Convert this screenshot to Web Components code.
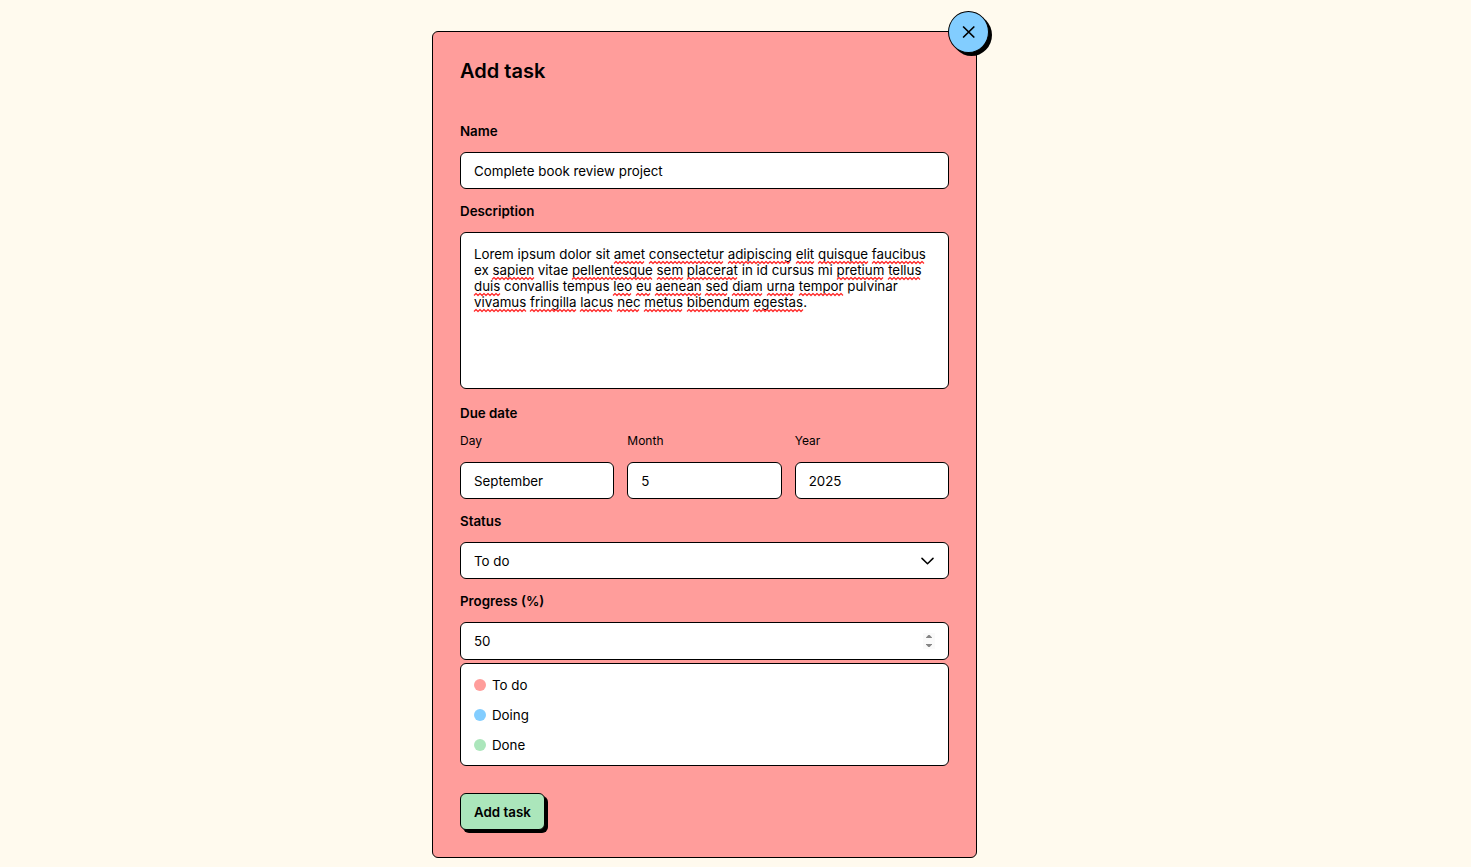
<!DOCTYPE html>
<html lang="en">
<head>
<meta charset="utf-8">
<meta name="viewport" content="width=device-width, initial-scale=1">
<title>Add task</title>
<style>
  :root {
    --cream: #fffaee;
    --coral: #ff9d9b;
    --sky: #82cdff;
    --mint: #abe6bb;
    --ink: #000;
    --radius: 6px;
    --pad: 13px;
  }
  body {
    margin: 0;
    min-height: 100vh;
    background: var(--cream);
    color: var(--ink);
    font-family: Inter, "Liberation Sans", sans-serif;
  }
</style>
</head>
<body>
<task-page>
  <task-dialog heading="Add task">
    <text-field label="Name" value="Complete book review project"></text-field>
    <note-field label="Description"
      value="Lorem ipsum dolor sit amet consectetur adipiscing elit quisque faucibus ex sapien vitae pellentesque sem placerat in id cursus mi pretium tellus duis convallis tempus leo eu aenean sed diam urna tempor pulvinar vivamus fringilla lacus nec metus bibendum egestas."
      known="lorem ipsum dolor sit ex vitae in id cursus mi convallis tempus pulvinar"></note-field>
    <date-group label="Due date">
      <text-field small label="Day" value="September"></text-field>
      <text-field small label="Month" value="5"></text-field>
      <text-field small label="Year" value="2025"></text-field>
    </date-group>
    <status-select label="Status"></status-select>
    <number-field label="Progress (%)" value="50"></number-field>
    <status-menu>
      <status-item color="var(--coral)">To do</status-item>
      <status-item color="var(--sky)">Doing</status-item>
      <status-item color="var(--mint)">Done</status-item>
    </status-menu>
    <submit-button slot="footer">Add task</submit-button>
  </task-dialog>
</task-page>

<script>
const CONTROL = `
  * { box-sizing: border-box; }
  label, legend { display: block; padding: 0; font-size: smaller; line-height: 16px; font-weight: 600; margin-bottom: 13px; }
  input, textarea, select {
    display: block; width: 100%; height: 37px; margin: 0; padding: 0 var(--pad);
    border: 1px solid var(--ink); border-radius: var(--radius);
    background: #fff; color: var(--ink);
    font-family: inherit; font-size: smaller; line-height: 16px; outline: none;
  }
`;

function define(name, html, setup) {
  const template = document.createElement('template');
  template.innerHTML = html;
  customElements.define(name, class extends HTMLElement {
    connectedCallback() {
      if (this.shadowRoot) return;
      this.attachShadow({ mode: 'open' }).append(template.content.cloneNode(true));
      if (setup) setup(this, this.shadowRoot);
    }
  });
}

define('task-page', `
  <style>
    :host { display: block; box-sizing: border-box; padding: 31px 78px 9px 16px; }
    main { max-width: 545px; margin: 0 auto; }
  </style>
  <main><slot></slot></main>`);

define('task-dialog', `
  <style>
    :host { display: block; position: relative; }
    section { border: 1px solid var(--ink); border-radius: var(--radius); background: var(--coral); padding: 27px; }
    h1 { margin: 0 0 40px; font-size: 20px; line-height: 24px; font-weight: 600; }
    .fields { display: flex; flex-direction: column; gap: 14px; }
    footer { margin-top: 27px; display: flex; }
    close-button { position: absolute; top: -20px; right: -12px; }
  </style>
  <section aria-labelledby="title">
    <h1 id="title"></h1>
    <div class="fields"><slot></slot></div>
    <footer><slot name="footer"></slot></footer>
  </section>
  <close-button></close-button>`,
  (host, root) => { root.querySelector('h1').textContent = host.getAttribute('heading'); });

define('close-button', `
  <style>
    :host { display: block; }
    button {
      display: grid; place-items: center; box-sizing: border-box; width: 41px; height: 42px; padding: 0;
      border: 1px solid var(--ink); border-radius: 50%; background: var(--sky); color: var(--ink);
      box-shadow: 3px 3px 0 var(--ink); cursor: pointer;
    }
    svg { display: block; }
  </style>
  <button type="button" aria-label="Close">
    <svg width="13" height="12" viewBox="0 0 13 12" fill="none" stroke="currentColor" stroke-width="1.7" stroke-linecap="round"><path d="M1.6 1 11.8 11M11.8 1 1.6 11"/></svg>
  </button>`);

define('text-field', `
  <style>${CONTROL}
    :host { display: block; }
    :host([small]) label { font-size: 12px; line-height: 14px; font-weight: 400; margin-bottom: 14px; }
  </style>
  <label for="box"></label>
  <input id="box" type="text">`,
  (host, root) => {
    root.querySelector('label').textContent = host.getAttribute('label');
    root.querySelector('input').value = host.getAttribute('value');
  });

define('number-field', `
  <style>${CONTROL}
    :host { display: block; }
    .wrap { display: grid; align-items: center; }
    .wrap > * { grid-area: 1 / 1; }
    input { height: 38px; appearance: textfield; }
    .steps { justify-self: end; display: grid; margin-right: 14px; z-index: 1; }
    button { display: grid; place-items: center; width: 12px; height: 8px; padding: 0; border: 0; background: #fafafa; }
    svg { display: block; fill: #858585; }
  </style>
  <label for="box"></label>
  <div class="wrap">
    <input id="box" type="number" min="0" max="100">
    <div class="steps">
      <button type="button" tabindex="-1" aria-label="Increase"><svg width="12" height="8" viewBox="0 0 12 8"><path d="M3 5V4.4L5.4 2H6.6L9 4.4V5Z"/></svg></button>
      <button type="button" tabindex="-1" aria-label="Decrease"><svg width="12" height="8" viewBox="0 0 12 8"><path d="M3 3V3.6L5.4 6H6.6L9 3.6V3Z"/></svg></button>
    </div>
  </div>`,
  (host, root) => {
    const box = root.querySelector('input');
    const [up, down] = root.querySelectorAll('button');
    root.querySelector('label').textContent = host.getAttribute('label');
    box.value = host.getAttribute('value');
    up.addEventListener('click', () => box.stepUp());
    down.addEventListener('click', () => box.stepDown());
  });

define('note-field', `
  <style>${CONTROL}
    :host { display: block; margin-bottom: 2px; }
    .wrap { position: relative; }
    textarea { height: 157px; padding: var(--pad); resize: none; }
    .mirror { position: absolute; inset: 0; padding: var(--pad); border: 1px solid transparent;
      font-size: smaller; line-height: 16px; white-space: pre-wrap; visibility: hidden; }
    svg { position: absolute; inset: 0; width: 100%; height: 100%; pointer-events: none; }
    path { fill: none; stroke: #ff2a2a; stroke-width: 1.2; stroke-linejoin: round; }
  </style>
  <label for="box"></label>
  <div class="wrap">
    <textarea id="box" spellcheck="false"></textarea>
    <svg aria-hidden="true"></svg>
  </div>`,
  (host, root) => {
    const box = root.querySelector('textarea');
    const wrap = root.querySelector('.wrap');
    const svg = root.querySelector('svg');
    const known = new Set(host.getAttribute('known').split(' '));
    root.querySelector('label').textContent = host.getAttribute('label');
    box.value = host.getAttribute('value');

    // Measures each unknown word in a temporary copy, then underlines it with a wave.
    const mark = () => {
      const mirror = document.createElement('div');
      mirror.className = 'mirror';
      mirror.textContent = box.value;
      wrap.append(mirror);
      const origin = wrap.getBoundingClientRect();
      const range = document.createRange();
      let d = '';
      for (const m of box.value.matchAll(/[A-Za-z]+/g)) {
        if (known.has(m[0].toLowerCase())) continue;
        range.setStart(mirror.firstChild, m.index);
        range.setEnd(mirror.firstChild, m.index + m[0].length);
        const r = range.getBoundingClientRect();
        const end = r.right - origin.left;
        const mid = Math.round(r.bottom - origin.top) + 0.5;
        let x = Math.round(r.left - origin.left);
        d += `M${x} ${mid + 1}`;
        for (let up = true; x + 2 <= end; up = !up) { x += 2; d += `L${x} ${up ? mid - 1 : mid + 1}`; }
      }
      mirror.remove();
      svg.innerHTML = `<path d="${d}"/>`;
    };
    mark();
    box.addEventListener('input', mark);
    addEventListener('resize', mark);
  });

define('date-group', `
  <style>${CONTROL}
    :host { display: block; }
    fieldset { margin: 0; padding: 0; border: 0; min-width: 0; }
    .row { display: grid; grid-template-columns: repeat(3, minmax(0, 1fr)); gap: var(--pad); }
  </style>
  <fieldset><legend></legend><div class="row"><slot></slot></div></fieldset>`,
  (host, root) => { root.querySelector('legend').textContent = host.getAttribute('label'); });

define('status-select', `
  <style>${CONTROL}
    :host { display: block; }
    .wrap { display: grid; align-items: center; }
    .wrap > * { grid-area: 1 / 1; }
    select { appearance: none; }
    svg { justify-self: end; margin-right: 15px; pointer-events: none; }
  </style>
  <label for="box"></label>
  <div class="wrap">
    <select id="box"><option>To do</option><option>Doing</option><option>Done</option></select>
    <svg width="13" height="8" viewBox="0 0 13 8" fill="none" stroke="currentColor" stroke-width="1.5" stroke-linecap="round" stroke-linejoin="round" aria-hidden="true"><path d="M1 1.4 6.5 6.8 12 1.4"/></svg>
  </div>`,
  (host, root) => { root.querySelector('label').textContent = host.getAttribute('label'); });

define('status-menu', `
  <style>
    :host { display: flex; flex-direction: column; gap: 14px; margin-top: -11px; padding: 13px 13px 12px;
      border: 1px solid var(--ink); border-radius: var(--radius); background: #fff; }
  </style>
  <slot></slot>`, host => host.setAttribute('role', 'listbox'));

define('status-item', `
  <style>
    :host { display: flex; align-items: center; gap: 6px; font-size: smaller; line-height: 16px; cursor: pointer; }
    i { width: 12px; height: 12px; border-radius: 50%; background: var(--dot); }
  </style>
  <i></i><span><slot></slot></span>`,
  host => {
    host.setAttribute('role', 'option');
    host.style.setProperty('--dot', host.getAttribute('color'));
  });

define('submit-button', `
  <style>
    :host { display: block; }
    button { display: block; box-sizing: border-box; height: 37px; padding: 0 var(--pad);
      border: 1px solid var(--ink); border-radius: var(--radius); background: var(--mint); color: var(--ink);
      box-shadow: 3px 3px 0 var(--ink); font-family: inherit; font-size: smaller; line-height: 16px; font-weight: 600; cursor: pointer; }
  </style>
  <button type="button"><slot></slot></button>`);
</script>
</body>
</html>
